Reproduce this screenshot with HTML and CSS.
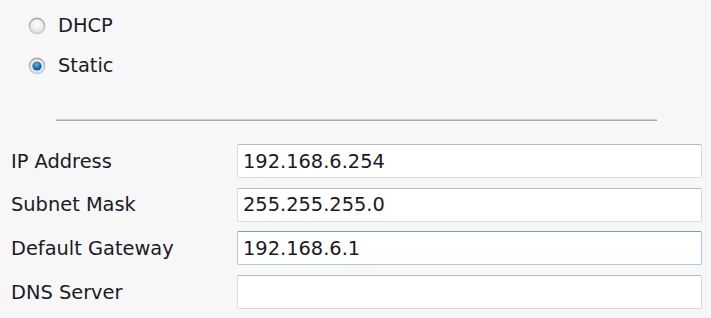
FILE: index.html
```html
<!DOCTYPE html>
<html>
<head>
<meta charset="utf-8">
<link rel="stylesheet" href="styles.css">
</head>
<body>
<div class="page">
  <div class="modes">
    <label class="radio-row">
      <svg class="radio" width="18" height="18" viewBox="0 0 18 18">
        <defs>
          <linearGradient id="ringOff" x1="0" y1="0" x2="0" y2="1">
            <stop offset="0" stop-color="#a9a9a9"/>
            <stop offset="1" stop-color="#d0d0d0"/>
          </linearGradient>
          <radialGradient id="fillOff" cx="0.5" cy="0.35" r="0.65">
            <stop offset="0" stop-color="#ffffff"/>
            <stop offset="1" stop-color="#e2e2e2"/>
          </radialGradient>
        </defs>
        <circle cx="9" cy="9" r="8.4" fill="url(#ringOff)"/>
        <circle cx="9" cy="9" r="6.8" fill="url(#fillOff)"/>
      </svg>
      <span class="radio-text">DHCP</span>
    </label>
    <label class="radio-row">
      <svg class="radio" width="18" height="18" viewBox="0 0 18 18">
        <defs>
          <radialGradient id="dotOn" cx="0.45" cy="0.35" r="0.7">
            <stop offset="0" stop-color="#5fb4e8"/>
            <stop offset="0.6" stop-color="#1c6fae"/>
            <stop offset="1" stop-color="#0f4d80"/>
          </radialGradient>
        </defs>
        <circle cx="9" cy="9" r="8.4" fill="url(#ringOff)"/>
        <circle cx="9" cy="9" r="6.8" fill="url(#fillOff)"/>
        <circle cx="9" cy="9" r="4.6" fill="url(#dotOn)"/>
      </svg>
      <span class="radio-text">Static</span>
    </label>
  </div>
  <div class="divider"></div>
  <div class="fields">
    <div class="field">
      <span class="label">IP Address</span>
      <div class="input">192.168.6.254</div>
    </div>
    <div class="field">
      <span class="label">Subnet Mask</span>
      <div class="input">255.255.255.0</div>
    </div>
    <div class="field">
      <span class="label">Default Gateway</span>
      <div class="input focused">192.168.6.1</div>
    </div>
    <div class="field">
      <span class="label">DNS Server</span>
      <div class="input"></div>
    </div>
  </div>
</div>
</body>
</html>
```

FILE: styles.css
```css
html, body {
  margin: 0;
  padding: 0;
  background: #f7f7f7;
}
body {
  font-family: Verdana, "DejaVu Sans", sans-serif;
  font-size: 19.4px;
  color: #1a1a24;
}
.page {
  width: 711px;
  height: 318px;
  overflow: hidden;
}
.modes {
  padding-top: 6px;
  padding-left: 28px;
  display: flex;
  flex-direction: column;
}
.radio-row {
  height: 40px;
  display: flex;
  align-items: center;
  gap: 12px;
}
.radio {
  display: block;
  flex: none;
}
.radio-text {
  line-height: 1;
}
.divider {
  margin: 33px 0 0 56px;
  width: 601px;
  border-top: 1px solid #cfcfcf;
  border-bottom: 1px solid #a9a9a9;
}
.fields {
  margin-top: 23px;
  display: flex;
  flex-direction: column;
  gap: 9.7px;
}
.field {
  display: flex;
  align-items: center;
  height: 34px;
}
.label {
  width: 226px;
  padding-left: 11px;
  flex: none;
}
.input {
  box-sizing: border-box;
  width: 465px;
  height: 34px;
  background: #fff;
  border: 1px solid #dadada;
  border-top-color: #b9b9b9;
  border-radius: 2px;
  padding-left: 5px;
  display: flex;
  align-items: center;
  color: #1a1a24;
}
.input.focused {
  border-color: #a9cbe8;
  border-top-color: #6e9fd0;
}
```
